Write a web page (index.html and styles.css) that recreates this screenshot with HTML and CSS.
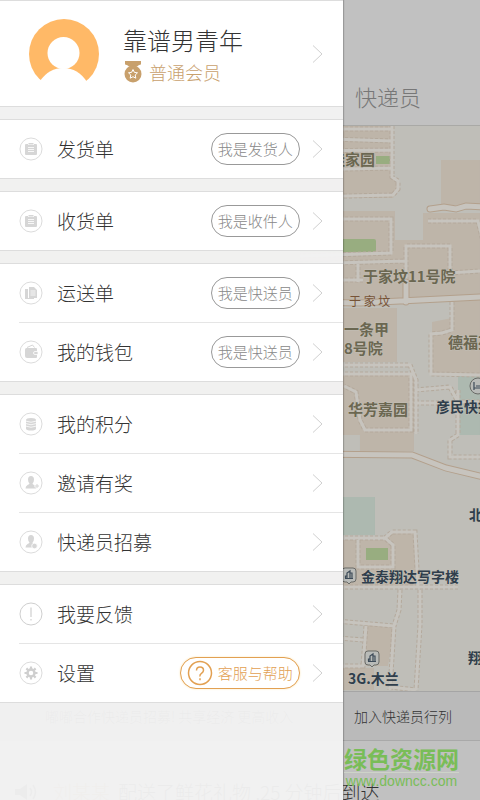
FILE: index.html
```
<!DOCTYPE html>
<html lang="zh-CN">
<head>
<title>快递员</title>
<meta charset="utf-8">
<meta name="viewport" content="width=device-width, initial-scale=1.0">
<link rel="stylesheet" href="styles.css">
</head>
<body>

<!-- shared icons -->
<svg class="defs" aria-hidden="true">
<symbol id="chevron" viewBox="0 0 12 20"><path d="M1 1.500L10 10L1 18.500" fill="none" stroke="#d0d0d0"/></symbol>
<symbol id="clipboard" viewBox="0 0 24 24">
<circle cx="12" cy="12" r="11" fill="none" stroke="#dcdcdc"/>
<path d="M7 7h2v1h6V7h2q1 0 1 1v9q0 1-1 1H7q-1 0-1-1V8q0-1 1-1zM9.500 6h5v1.500h-5z" fill="#d6d6d6"/>
<path d="M9 10.500h6M9 12.500h6M9 14.500h6" stroke="#fff" stroke-width=".8"/>
</symbol>
<symbol id="building" viewBox="0 0 16 18">
<path d="M4 1h8q3 0 3 3v8q0 3-3 3h-2l-2 2-2-2H4q-3 0-3-3V4q0-3 3-3z" fill="#b9bbb8" stroke="#696a66"/>
<path d="M6 11V6l3-2v7M9 6h2v5M4 11.500h8M4.500 11V9H6" fill="none" stroke="#3d4b58" stroke-width="1.200"/>
</symbol>
</svg>

<div class="app">

<main class="home">
<header class="topbar"><h1>快递员</h1></header>

<svg class="map" viewBox="0 126 480 566" preserveAspectRatio="xMaxYMin slice">
<rect y="126" width="480" height="566" fill="#bfbeb8"/>

<!-- blocks -->
<g fill="#beb5a9">
<path d="M300 126h93v52l6 4v8l-6 8h-93zM441 160h39v45h-39zM300 211h95v29h28v-27h57v84l-74 3H300zM300 308h97v54h-97zM432 322l20-4v-18h28v76h-48zM300 373h114v78h-54v-16h-60zM300 540h85l7-8h24v56H300zM366 624l28 4-6 38h-22zM300 668h74v22h-74z"/>
</g>
<path d="M376 156h14v8h-14zM300 239h74q2 0 2 2v9q0 2-2 2h-74zM366 548h22v12h-22z" fill="#98ad80"/>
<path d="M458 376h22v59h-22zM300 497h75v38h-75z" fill="#adb9b0"/>

<!-- lanes: dashed edge, then the light surface -->
<g class="lane-edge">
<path id="lanes" d="M300 129h92M300 138l92 3M300 151l92-1M300 170l92-2M392 126v51l6 4v8l-5 6l-93 2M300 219h91v34l-91 3M428 221h50l5 20M300 264l105-3M358 262v20M406 295v-49h44v27l30-2M300 280h63M452 302v28l-10 3-11 1v40l49 1M300 365h110l6 15v54M300 374h111v56h-46l-5-10-4-28-12-6M416 390l34-3 8 15h22M416 403h42M458 390v45l-8 5v17h30M300 538h85l7-6h23l3 56M358 540v27h35v-22l-8-7M300 587h158M400 590l-1 20-5 16-4 64M420 590v35l-4 65M300 618l94 8M366 626l-3 40h-63M363 640l-63-5M390 687l26 3"/>
</g>
<use href="#lanes" class="lane"/>

<!-- main roads -->
<path class="road-edge" d="M430 209l14-2 12 2 10-3 20 1M300 302l60 1 120-6M406 282v20M300 454l112 1 34 13 50 12"/>
<path class="road" d="M430 209l14-2 12 2 10-3 20 1M300 302l60 1 120-6M406 282v20M300 454l112 1 34 13 50 12"/>

<g class="place">
<text x="330" y="165">佳家园</text>
<text x="363" y="282">于家坟11号院</text>
<text x="344" y="335">一条甲</text>
<text x="344" y="354">8号院</text>
<text x="448" y="348">德福苑</text>
<text x="348" y="415">华芳嘉园</text>
</g>
<text class="street" x="349" y="306">于 家 坟</text>
<g class="poi">
<text x="436" y="412">彦民快捷</text>
<text x="469" y="520">北京</text>
<text x="361" y="582">金泰翔达写字楼</text>
<text x="468" y="663">翔达</text>
<text x="348" y="684">3G.木兰</text>
</g>
<circle cx="478" cy="386" r="8" fill="#b9bbb8" stroke="#696a66"/>
<path d="M474 382v8M474 388h8M476 386h6" stroke="#3d4b58" stroke-width="1.200"/>
<use href="#building" x="341" y="567" width="16" height="18"/>
<use href="#building" x="364" y="650" width="16" height="18"/>
</svg>

<div class="join">
<span>嘟嘟合作快递员招募! 共享经济 更高收入</span>
<a href="#join">加入快递员行列</a>
</div>

<footer class="ticker">
<svg class="speaker" viewBox="0 0 22 16"><path d="M0 5h5l7-5v16l-7-5H0z" fill="#555"/><path d="M15 4q3 4 0 8M18 1q5 7 0 14" fill="none" stroke="#555" stroke-width="1.500"/></svg>
<span class="sender">刘某某</span>
<span>配送了鲜花礼物 ,25 分钟后到达</span>
</footer>
</main>

<nav class="drawer">
<a class="profile" href="#profile">
<svg class="avatar" viewBox="0 0 70 70">
<circle cx="35" cy="35" r="35" fill="#ffb967"/>
<circle cx="34.500" cy="34" r="16" fill="#fff"/>
<path d="M11 62Q20 49 34.500 49T58 63L58 70H11z" fill="#fff"/>
</svg>
<span class="who">
<span class="name">靠谱男青年</span>
<span class="level">
<svg class="medal" viewBox="0 0 18 22">
<path d="M1 0h16v3q0 1-2 1l-2 1.500H5L3 4Q1 4 1 3z" fill="#c8a06c"/>
<circle cx="9" cy="13" r="8.500" fill="#c8a06c"/>
<path d="M9 8.500l1.400 2.900 3.100.4-2.300 2.200.6 3.200L9 15.700l-2.800 1.500.6-3.200-2.300-2.200 3.100-.4z" fill="none" stroke="#fff"/>
</svg>
普通会员
</span>
</span>
<svg class="chevron"><use href="#chevron"/></svg>
</a>

<ul class="group">
<li>
<svg class="icon"><use href="#clipboard"/></svg>
<a href="#send">发货单</a>
<button class="pill">我是发货人</button>
<svg class="chevron"><use href="#chevron"/></svg>
</li>
</ul>

<ul class="group">
<li>
<svg class="icon"><use href="#clipboard"/></svg>
<a href="#receive">收货单</a>
<button class="pill">我是收件人</button>
<svg class="chevron"><use href="#chevron"/></svg>
</li>
</ul>

<ul class="group">
<li>
<svg class="icon" viewBox="0 0 24 24">
<circle cx="12" cy="12" r="11" fill="none" stroke="#dcdcdc"/>
<path d="M6 8h3v9h6v1H6zM10 6h5l3 3v8h-8z" fill="#d6d6d6"/>
<path d="M11.500 10h5M11.500 12h5M11.500 14h5" stroke="#fff" stroke-width=".8"/>
</svg>
<a href="#deliver">运送单</a>
<button class="pill">我是快送员</button>
<svg class="chevron"><use href="#chevron"/></svg>
</li>
<li>
<svg class="icon" viewBox="0 0 24 24">
<circle cx="12" cy="12" r="11" fill="none" stroke="#dcdcdc"/>
<path d="M8 7.500L13.500 5l2 2.500" fill="none" stroke="#d6d6d6"/>
<path d="M7.500 8H17q1 0 1 1v8q0 1-1 1H8q-2 0-2-2V9.500Q6 8 7.500 8z" fill="#d6d6d6"/>
<path d="M19 11.500h-3q-1.500 0-1.500 1.500t1.500 1.500h3z" fill="#d6d6d6" stroke="#fff" stroke-width=".8"/>
</svg>
<a href="#wallet">我的钱包</a>
<button class="pill">我是快送员</button>
<svg class="chevron"><use href="#chevron"/></svg>
</li>
</ul>

<ul class="group">
<li>
<svg class="icon" viewBox="0 0 24 24">
<circle cx="12" cy="12" r="11" fill="none" stroke="#dcdcdc"/>
<path d="M7 8q0-2 5-2t5 2v8.500q0 2-5 2t-5-2z" fill="#d6d6d6"/>
<path d="M6.500 9q5.500 2.500 11 0M6.500 11.500q5.500 2.500 11 0M6.500 14q5.500 2.500 11 0" fill="none" stroke="#fff" stroke-width=".8"/>
</svg>
<a href="#points">我的积分</a>
<svg class="chevron"><use href="#chevron"/></svg>
</li>
<li>
<svg class="icon" viewBox="0 0 24 24">
<circle cx="12" cy="12" r="11" fill="none" stroke="#dcdcdc"/>
<path d="M12 5q3 0 3 3.500 0 2.500-1.500 4 0 1 2 1.500t2 3.500h-11q0-2.500 2-3.500t2-1.500q-1.500-1.500-1.500-4Q9 5 12 5z" fill="#d6d6d6"/>
<path d="M18 12.500v5M15.500 15h5" stroke="#fff" stroke-width="2.500"/>
<path d="M18 13v4M16 15h4" stroke="#d6d6d6"/>
</svg>
<a href="#invite">邀请有奖</a>
<svg class="chevron"><use href="#chevron"/></svg>
</li>
<li>
<svg class="icon" viewBox="0 0 24 24">
<circle cx="12" cy="12" r="11" fill="none" stroke="#dcdcdc"/>
<path d="M12 5q3 0 3 3.500 0 2.500-1.500 4 0 1 2 1.500t2 3.500h-11q0-2.500 2-3.500t2-1.500q-1.500-1.500-1.500-4Q9 5 12 5z" fill="#d6d6d6"/>
<circle cx="15.500" cy="16" r="2.800" fill="#d6d6d6" stroke="#fff" stroke-width=".8"/>
</svg>
<a href="#recruit">快递员招募</a>
<svg class="chevron"><use href="#chevron"/></svg>
</li>
</ul>

<ul class="group">
<li>
<svg class="icon" viewBox="0 0 24 24">
<circle cx="12" cy="12" r="11" fill="none" stroke="#cfcfcf"/>
<path d="M12 5.500v9.500M12 17v1.500" stroke="#cfcfcf" stroke-width="1.200"/>
</svg>
<a href="#feedback">我要反馈</a>
<svg class="chevron"><use href="#chevron"/></svg>
</li>
<li>
<svg class="icon" viewBox="0 0 24 24">
<circle cx="12" cy="12" r="11" fill="none" stroke="#dcdcdc"/>
<circle cx="12" cy="12" r="3.500" fill="none" stroke="#cfcfcf" stroke-width="2.500"/>
<path d="M12 5.500v2.500M12 16v2.500M5.500 12H8M16 12h2.500M7.400 7.400l1.800 1.800M14.800 14.800l1.800 1.800M7.400 16.600l1.800-1.800M14.800 9.200l1.800-1.800" stroke="#cfcfcf" stroke-width="2.200"/>
</svg>
<a href="#settings">设置</a>
<button class="pill help">
<svg viewBox="0 0 26 26"><circle cx="13" cy="13" r="11.500"/><path d="M9.500 10.500Q9.500 7 13 7t3.500 3.300Q16.500 12 14.500 13.300T13 16.500M13 18.200v2"/></svg>
客服与帮助
</button>
<svg class="chevron"><use href="#chevron"/></svg>
</li>
</ul>
</nav>

<div class="watermark">
<strong>绿色资源网</strong>
<span>www.downcc.com</span>
</div>

</div>
</body>
</html>
```
FILE: styles.css
```
* {
    box-sizing: border-box;
}

body {
    margin: 0;
    font-family: "Noto Sans CJK SC", "Noto Sans", sans-serif;
    font-weight: 300;
    color: #333;
}

a {
    color: inherit;
    text-decoration: none;
}

.defs {
    position: absolute;
    width: 0;
    height: 0;
}

/* the drawer lies over the home screen */
.app {
    position: relative;
    display: grid;
    grid-template-columns: 5fr 2fr;
    height: 100vh;
    overflow: hidden;
}

.home {
    grid-area: 1 / 1 / 2 / 3;
    display: flex;
    flex-direction: column;
    min-height: 0;
    background-color: #c1c1c1;
}

.topbar {
    display: flex;
    justify-content: flex-end;
    align-items: flex-end;
    height: 126px;
    padding: 0 59px 13px;
    border-bottom: 1px solid #a9a9a6;
}

.topbar h1 {
    margin: 0;
    font-size: 22px;
    line-height: 32px;
    font-weight: 300;
    color: #777;
}

.map {
    flex: 1;
    width: 100%;
    min-height: 0;
}

.lane-edge {
    fill: none;
    stroke: #b4a99c;
    stroke-width: 5px;
    stroke-dasharray: 3 2;
}

.lane {
    fill: none;
    stroke: #c7c4be;
    stroke-width: 3px;
}

.road-edge {
    fill: none;
    stroke: #b3a08c;
    stroke-width: 7px;
    stroke-linecap: round;
}

.road {
    fill: none;
    stroke: #c7c4be;
    stroke-width: 5px;
    stroke-linecap: round;
}

.place, .poi {
    font-size: 15px;
    font-weight: bold;
    paint-order: stroke;
    stroke: #c3bfb6;
    stroke-width: 1px;
}

.place {
    fill: #6b6751;
}

.poi {
    font-size: 14px;
    fill: #2f3e4c;
}

.street {
    font-size: 12px;
    font-weight: 400;
    fill: #765337;
}

.join {
    display: flex;
    justify-content: space-between;
    align-items: center;
    height: 50px;
    padding: 0 28px 0 45px;
    border-top: 1px solid #a5a5a5;
    border-bottom: 1px solid #a9a9a9;
    background-color: #bababa;
    font-size: 14px;
}

.ticker {
    display: flex;
    align-items: center;
    gap: 8px;
    height: 59px;
    padding: 42px 0 0 15px;
    font-size: 19px;
    line-height: 20px;
    white-space: nowrap;
}

.speaker {
    width: 22px;
    height: 16px;
    margin-right: 8px;
}

.sender {
    color: #a8835f;
}

.drawer {
    grid-area: 1 / 1 / 2 / 2;
    z-index: 1;
    background-color: rgba(242, 242, 242, 0.96);
    box-shadow: 1px 0 1px rgba(0, 0, 0, 0.2);
}

.profile {
    display: flex;
    align-items: center;
    height: 107px;
    padding: 0 19px 0 29px;
    border: 1px solid #ddd;
    border-width: 1px 0;
    background-color: #fff;
}

.avatar {
    width: 70px;
    height: 70px;
}

.who {
    flex: 1;
    display: flex;
    flex-direction: column;
    padding: 4px 0 0 24px;
}

.name {
    font-size: 24px;
    line-height: 32px;
}

.level {
    display: flex;
    align-items: center;
    gap: 7px;
    font-size: 18px;
    line-height: 32px;
    color: #c8a06c;
}

.medal {
    width: 18px;
    height: 22px;
    margin-left: 1px;
}

.chevron {
    width: 12px;
    height: 20px;
}

.group {
    margin: 12px 0 0;
    padding: 0 0 0 19px;
    border: 1px solid #ddd;
    border-width: 1px 0;
    background-color: #fff;
    list-style: none;
}

.group li {
    display: flex;
    align-items: center;
    height: 58px;
    padding-right: 19px;
}

.group li + li {
    height: 59px;
    border-top: 1px solid #e5e5e5;
}

.group a {
    flex: 1;
    padding-left: 14px;
    font-size: 19px;
    line-height: 56px;
}

.icon {
    width: 24px;
    height: 24px;
}

.pill {
    height: 32px;
    margin-right: 12px;
    padding: 0 6px;
    border: 1px solid #999;
    border-radius: 16px;
    background-color: #fff;
    font: inherit;
    font-size: 15px;
    line-height: 28px;
    color: #888;
}

.help {
    display: flex;
    align-items: center;
    gap: 5px;
    border-color: #e2a052;
    box-shadow: 0 0 2px #fbe3b0;
    color: #e2a052;
}

.help svg {
    width: 26px;
    height: 26px;
    fill: none;
    stroke: #e2a052;
    stroke-width: 1.5px;
}

.watermark {
    position: absolute;
    right: 21px;
    bottom: 11px;
    z-index: 2;
    display: flex;
    flex-direction: column;
    align-items: center;
    color: #79bd58;
}

.watermark strong {
    border-bottom: 1px solid #cdd3c9;
    font-size: 23px;
    line-height: 28px;
    font-weight: 700;
}

.watermark span {
    font-family: "Liberation Sans", Arial, sans-serif;
    font-size: 14px;
    line-height: 16px;
    font-weight: 400;
}
```
